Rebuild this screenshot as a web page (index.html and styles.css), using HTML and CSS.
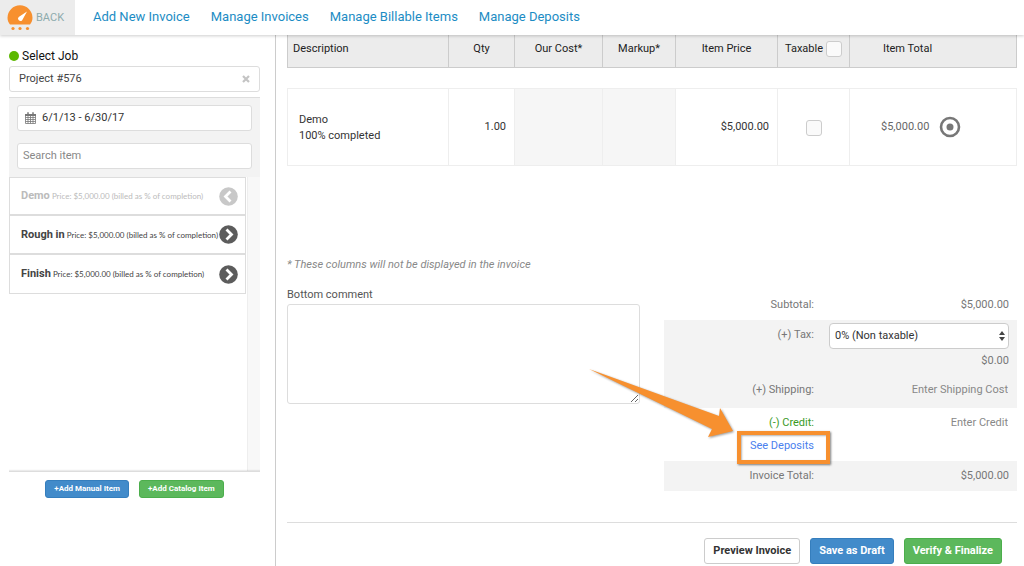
FILE: index.html
```html
<!DOCTYPE html>
<html lang="en">
<head>
    <meta charset="UTF-8">
    <meta name="viewport" content="width=device-width, initial-scale=1.0">
    <title>Add New Invoice</title>
    <link rel="stylesheet" href="styles.css">
</head>
<body>

    <header class="topbar">
        <a href="#" class="back">
            <svg class="logo" width="26" height="26" viewBox="0 0 26 26" aria-hidden="true">
                <path d="M3 19.500C1.500 17.800.5 15.500.5 12.800a12.500 12.500 0 0 1 25 0c0 2.700-1 5-2.500 6.700z" fill="#f7902f"/>
                <path d="M20 6.500l-4.800 8.700a2.400 2.400 0 1 1-3.500-3.300z" fill="#fff"/>
                <circle cx="6" cy="23.500" r="1.600" fill="#f7902f"/>
                <circle cx="13" cy="23.500" r="1.600" fill="#f7902f"/>
                <circle cx="20.500" cy="23.500" r="1.600" fill="#f7902f"/>
            </svg>
            <span>BACK</span>
        </a>
        <nav class="menu">
            <a href="#">Add New Invoice</a>
            <a href="#">Manage Invoices</a>
            <a href="#">Manage Billable Items</a>
            <a href="#">Manage Deposits</a>
        </nav>
    </header>

    <div class="page">
        <aside class="sidebar">
            <label for="job" class="job-label"><span class="dot"></span>Select Job</label>
            <div class="field job-field">
                <input type="text" id="job" name="job" value="Project #576">
                <button type="button" class="clear" aria-label="Clear job">
                    <svg width="8" height="8" viewBox="0 0 8 8"><path d="M1 1l6 6M7 1L1 7" stroke="#c4c4c4" stroke-width="2.200"/></svg>
                </button>
            </div>

            <div class="filters">
                <div class="field date-field">
                    <svg width="11" height="12" viewBox="0 0 11 12" aria-hidden="true">
                        <path d="M.5 3h10v8.500H.5zM.5 5.500h10M.5 7.500h10M.5 9.500h10M3 4v7.500M5.500 4v7.500M8 4v7.500" fill="none" stroke="#777" stroke-width=".8"/>
                        <path d="M0 2h11v2H0z" fill="#777"/>
                        <path d="M3 .3v2.500M8 .3v2.500" stroke="#777" stroke-width="1.500"/>
                    </svg>
                    <input type="text" name="dates" value="6/1/13 - 6/30/17" aria-label="Date range">
                </div>
                <div class="field">
                    <input type="text" name="search" placeholder="Search item" aria-label="Search item">
                </div>
            </div>

            <div class="scroller">
                <ul class="items">
                    <li class="item used">
                        <span><b>Demo</b> Price: $5,000.00 (billed as % of completion)</span>
                        <button type="button" aria-label="Remove Demo">
                            <svg width="19" height="19" viewBox="0 0 19 19"><circle cx="9.500" cy="9.500" r="9.300" fill="#c8c8c8"/><path d="M11.500 4.500l-5 5 5 5" fill="none" stroke="#fff" stroke-width="2.800"/></svg>
                        </button>
                    </li>
                    <li class="item">
                        <span><b>Rough in</b> Price: $5,000.00 (billed as % of completion)</span>
                        <button type="button" aria-label="Add Rough in">
                            <svg width="19" height="19" viewBox="0 0 19 19"><circle cx="9.500" cy="9.500" r="9.300" fill="#5c5c5c"/><path d="M7.500 4.500l5 5-5 5" fill="none" stroke="#fff" stroke-width="2.800"/></svg>
                        </button>
                    </li>
                    <li class="item">
                        <span><b>Finish</b> Price: $5,000.00 (billed as % of completion)</span>
                        <button type="button" aria-label="Add Finish">
                            <svg width="19" height="19" viewBox="0 0 19 19"><circle cx="9.500" cy="9.500" r="9.300" fill="#5c5c5c"/><path d="M7.500 4.500l5 5-5 5" fill="none" stroke="#fff" stroke-width="2.800"/></svg>
                        </button>
                    </li>
                </ul>
            </div>

            <div class="side-buttons">
                <button type="button" class="btn small blue">+Add Manual Item</button>
                <button type="button" class="btn small green">+Add Catalog Item</button>
            </div>
        </aside>

        <main class="content">
            <table class="invoice">
                <colgroup>
                    <col><col class="c-qty"><col class="c-cost"><col class="c-markup"><col class="c-price"><col class="c-tax"><col class="c-total">
                </colgroup>
                <thead>
                    <tr>
                        <th class="left">Description</th>
                        <th>Qty</th>
                        <th>Our Cost*</th>
                        <th>Markup*</th>
                        <th>Item Price</th>
                        <th><label class="tax-all">Taxable <input type="checkbox" name="tax-all"></label></th>
                        <th class="total-head">Item Total</th>
                    </tr>
                </thead>
                <tbody>
                    <tr class="spacer"><td colspan="7"></td></tr>
                    <tr class="row">
                        <td class="desc">Demo<br>100% completed</td>
                        <td class="num">1.00</td>
                        <td class="off"></td>
                        <td class="off"></td>
                        <td class="num">$5,000.00</td>
                        <td class="mid"><input type="checkbox" name="tax" aria-label="Taxable"></td>
                        <td>
                            <div class="row-total">
                                <span>$5,000.00</span>
                                <button type="button" aria-label="Item options">
                                    <svg width="22" height="22" viewBox="0 0 22 22"><circle cx="11" cy="11" r="9" fill="none" stroke="#777" stroke-width="2.600"/><circle cx="11" cy="11" r="3.500" fill="#777"/></svg>
                                </button>
                            </div>
                        </td>
                    </tr>
                </tbody>
            </table>

            <p class="note">* These columns will not be displayed in the invoice</p>

            <div class="bottom">
                <div class="comment">
                    <label for="comment">Bottom comment</label>
                    <textarea id="comment" name="comment"></textarea>
                </div>

                <div class="totals">
                    <div class="line">
                        <span class="name">Subtotal:</span>
                        <span class="value">$5,000.00</span>
                    </div>
                    <div class="shade">
                        <div class="line tax">
                            <label class="name" for="tax-rate">(+) Tax:</label>
                            <div class="value">
                                <div class="select">
                                    <select id="tax-rate" name="tax-rate">
                                        <option>0% (Non taxable)</option>
                                    </select>
                                    <svg width="6" height="10" viewBox="0 0 6 10" aria-hidden="true"><path d="M3 0l3 4H0zM3 10l3-4H0z" fill="#444"/></svg>
                                </div>
                                <span class="tax-amount">$0.00</span>
                            </div>
                        </div>
                        <div class="line shipping">
                            <label class="name" for="shipping">(+) Shipping:</label>
                            <input class="value" type="text" id="shipping" name="shipping" placeholder="Enter Shipping Cost">
                        </div>
                    </div>
                    <div class="line">
                        <label class="name credit" for="credit">(-) Credit:</label>
                        <input class="value" type="text" id="credit" name="credit" placeholder="Enter Credit">
                    </div>
                    <div class="line deposits">
                        <div class="name">
                            <span class="callout">
                                <a href="#">See Deposits</a>
                                <svg class="arrow" width="150" height="78" viewBox="0 0 150 78" aria-hidden="true">
                                    <path d="M6 4L136 51l1-8 13 23-25 6 4-8z" fill="#f7902f"/>
                                </svg>
                            </span>
                        </div>
                    </div>
                    <div class="line shade">
                        <span class="name">Invoice Total:</span>
                        <span class="value">$5,000.00</span>
                    </div>
                </div>
            </div>

            <div class="actions">
                <button type="button" class="btn">Preview Invoice</button>
                <button type="button" class="btn blue">Save as Draft</button>
                <button type="button" class="btn green">Verify &amp; Finalize</button>
            </div>
        </main>
    </div>

</body>
</html>
```
FILE: styles.css
```css
* {
    box-sizing: border-box;
}

body {
    margin: 0;
    font-family: Roboto, "Liberation Sans", sans-serif;
    font-size: 11px;
    line-height: 16px;
    color: #333;
    background-color: #fff;
}

input,
select,
textarea,
button {
    font-family: inherit;
    font-size: inherit;
    line-height: inherit;
    color: inherit;
}

button {
    padding: 0;
    border: none;
    background: none;
    cursor: pointer;
}

svg {
    display: block;
}

a {
    text-decoration: none;
}

/* top bar */
.topbar {
    position: relative;
    display: flex;
    height: 35px;
    background-color: #fff;
    box-shadow: 0 1px 3px rgba(0, 0, 0, 0.2);
}

.back {
    display: flex;
    align-items: center;
    gap: 3px;
    width: 75px;
    padding-left: 7px;
    background-color: #ececec;
    color: #8eabad;
}

.menu {
    display: flex;
    align-items: center;
    gap: 21px;
    padding: 0 18px 2px;
    font-size: 13px;
}

.menu a {
    color: #1c8cc4;
}

/* layout */
.page {
    display: flex;
    min-height: calc(100vh - 35px);
}

.sidebar {
    width: 276px;
    padding: 13px 15px 0 9px;
    border-right: 1px solid #ccc;
}

.content {
    flex: 1;
    padding: 0 7px 2px 11px;
}

/* sidebar */
.job-label {
    display: flex;
    align-items: center;
    gap: 3px;
    margin-bottom: 2px;
    font-size: 12px;
    color: #111;
}

.dot {
    width: 10px;
    height: 10px;
    border-radius: 50%;
    background-color: #5cb800;
}

.field {
    display: flex;
    align-items: center;
    height: 26px;
    padding: 0 5px;
    border: 1px solid #ddd;
    border-radius: 3px;
    background-color: #fff;
}

.field input {
    flex: 1;
    min-width: 0;
    padding: 0;
    border: none;
    outline: none;
    background: none;
}

.job-field {
    padding: 0 9px;
    color: #444;
}

.date-field {
    gap: 6px;
    padding-left: 7px;
}

::placeholder {
    color: #888;
    opacity: 1;
}

.filters {
    display: grid;
    gap: 12px;
    margin-top: 5px;
    padding: 7px 8px 8px;
    border-top: 1px solid #ddd;
    background-color: #f3f3f3;
}

.scroller {
    height: 295px;
    padding-right: 14px;
    border-bottom: 1px solid #ddd;
    background: linear-gradient(to right, #eee 1px, #f8f8f8 1px) right / 13px 100% no-repeat;
    box-shadow: 0 -2px 2px -2px rgba(0, 0, 0, 0.3) inset;
}

.items {
    margin: 0;
    padding: 0;
    list-style: none;
}

.item {
    display: flex;
    align-items: center;
    justify-content: space-between;
    height: 39px;
    padding: 0 7px 0 11px;
    border: 1px solid #ddd;
    border-top: none;
    border-bottom-width: 2px;
    background-color: #fff;
    font-family: Lato, sans-serif;
    font-size: 8px;
    color: #444;
    white-space: nowrap;
}

.item:first-child {
    border-top: 1px solid #ddd;
}

.item:last-child {
    border-bottom-width: 1px;
}

.item b {
    font-family: Roboto, sans-serif;
    font-size: 11px;
}

.item.used {
    color: #bbb;
}

.side-buttons {
    display: flex;
    justify-content: center;
    gap: 10px;
    margin-top: 8px;
}

/* buttons */
.btn {
    height: 26px;
    padding: 0 8px;
    border: 1px solid #ccc;
    border-radius: 3px;
    background-color: #fff;
    font-weight: bold;
}

.btn.small {
    height: 18px;
    font-size: 8px;
    line-height: 14px;
}

.btn.blue {
    border-color: #357ebd;
    background-color: #428bca;
    color: #fff;
}

.btn.green {
    border-color: #4cae4c;
    background-color: #5cb85c;
    color: #fff;
}

/* invoice table */
.invoice {
    width: 100%;
    border-collapse: collapse;
    table-layout: fixed;
}

.c-qty { width: 66px; }
.c-cost { width: 88px; }
.c-markup { width: 73px; }
.c-price { width: 102px; }
.c-tax { width: 72px; }
.c-total { width: 167px; }

.invoice th {
    height: 32px;
    padding: 0 5px 4px;
    border: 1px solid #ccc;
    border-top: none;
    background-color: #ececec;
    font-weight: normal;
    color: #222;
}

.invoice th.left {
    text-align: left;
}

.invoice th.total-head {
    padding-right: 56px;
}

.tax-all {
    display: flex;
    align-items: center;
    justify-content: center;
    gap: 3px;
}

.invoice input {
    appearance: none;
    display: block;
    width: 16px;
    height: 16px;
    margin: 0;
    border: 1px solid #ccc;
    border-radius: 3px;
    background-color: #fafafa;
}

.spacer td {
    height: 21px;
    padding: 0;
}

.row td {
    height: 77px;
    padding: 0 8px;
    border: 1px solid #eee;
}

.row .desc {
    padding: 2px 11px 0;
}

.row .num {
    text-align: right;
}

.row .off {
    background-color: #f6f6f6;
}

.row .mid {
    padding-top: 2px;
}

.row .mid input {
    margin: 0 auto;
}

.row-total {
    display: flex;
    align-items: center;
    gap: 10px;
    padding-left: 23px;
    color: #666;
}

.note {
    margin: 91px 0 14px;
    font-style: italic;
    color: #888;
}

/* comment and totals */
.bottom {
    display: grid;
    grid-template-columns: 1fr 1fr;
    gap: 24px;
}

.comment label {
    display: block;
    margin-bottom: 1px;
    color: #555;
}

.comment textarea {
    display: block;
    width: 100%;
    height: 100px;
    border: 1px solid #ddd;
    border-radius: 3px;
    outline: none;
}

.totals {
    padding-top: 3px;
    color: #777;
}

.line {
    display: grid;
    grid-template-columns: 150px 1fr;
    gap: 15px;
    align-items: center;
    min-height: 30px;
    padding-right: 8px;
}

.shade {
    background-color: #f3f3f3;
}

.name,
.value {
    text-align: right;
}

.line input {
    width: 100%;
    min-width: 0;
    padding: 0 1px;
    border: none;
    outline: none;
    background: none;
}

.line.tax {
    align-items: start;
    padding-top: 3px;
}

.tax .name {
    padding-top: 4px;
}

.select {
    display: flex;
    align-items: center;
    height: 26px;
    padding: 0 3px 0 5px;
    border: 1px solid #ccc;
    border-radius: 4px;
    background-color: #fff;
    color: #333;
}

.select select {
    appearance: none;
    flex: 1;
    min-width: 0;
    padding: 0;
    border: none;
    outline: none;
    background: none;
}

.tax-amount {
    display: block;
    padding-top: 4px;
}

.shipping {
    min-height: 39px;
    padding-top: 3px;
}

.name.credit {
    color: #3a9a1f;
}

.line.deposits {
    min-height: 23px;
    align-items: start;
}

.callout {
    position: relative;
}

.callout a {
    color: #4a80ee;
}

/* orange frame around the link */
.callout::after {
    content: "";
    position: absolute;
    top: -8px;
    right: -16px;
    bottom: -12px;
    left: -13px;
    border: 4px solid #f7902f;
    box-shadow: 1px 1px 2px rgba(0, 0, 0, 0.5), 1px 1px 2px rgba(0, 0, 0, 0.3) inset;
    pointer-events: none;
}

.arrow {
    position: absolute;
    right: calc(100% + 17px);
    bottom: 9px;
    filter: drop-shadow(1px 1px 1px rgba(0, 0, 0, 0.4));
    pointer-events: none;
}

.actions {
    display: flex;
    justify-content: flex-end;
    gap: 10px;
    margin-top: 31px;
    padding: 15px 15px 0 0;
    border-top: 1px solid #ddd;
}
```
